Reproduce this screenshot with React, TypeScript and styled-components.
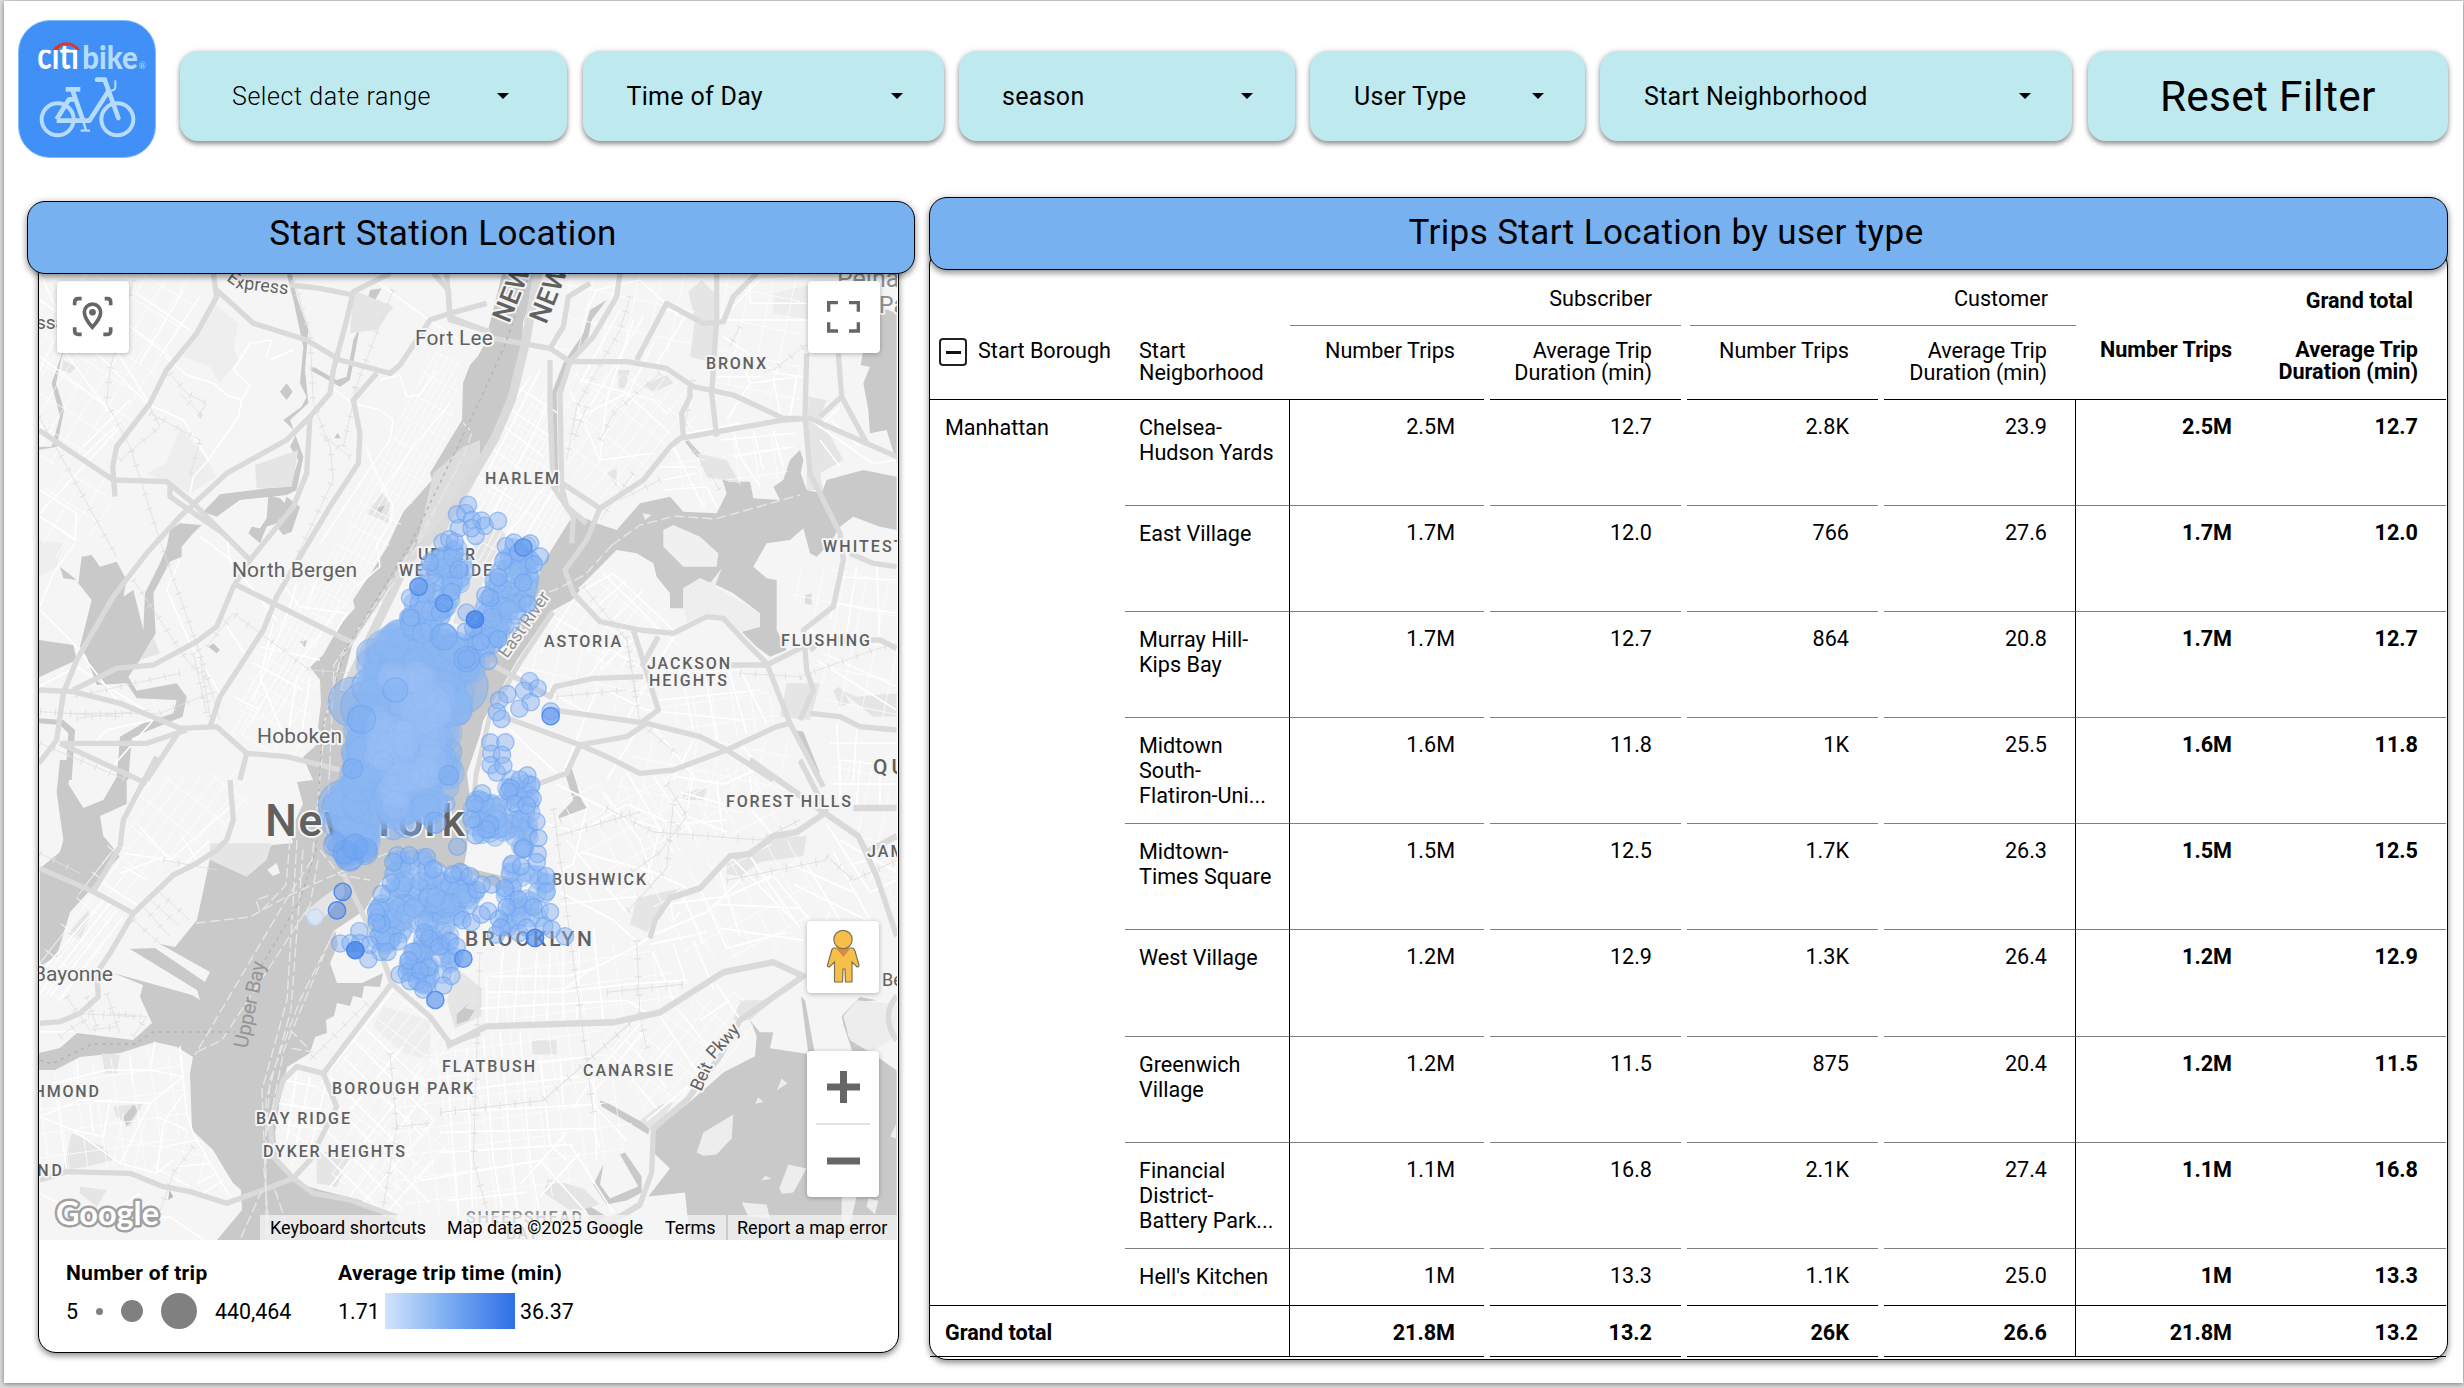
import React from 'react';
import styled, { createGlobalStyle, css } from 'styled-components';

const GlobalStyle = createGlobalStyle`
  *, *::before, *::after { box-sizing: border-box; }
  body { margin: 0; background: #dedede; font-family: Roboto, "Liberation Sans", sans-serif; color: #000; }
`;

const Frame = styled.div`
  width: 2464px;
  height: 1388px;
  padding: 1px 1px 5px 4px;
  background: #dcdcdc;
  overflow: hidden;
`;

const Page = styled.main`
  height: 1382px;
  background: #fff;
  padding: 19px 14px 0 14px;
  box-shadow: 0 1px 5px rgba(0, 0, 0, 0.45);
  display: flex;
  flex-direction: column;
`;

/* ---------- filter bar ---------- */

const TopBar = styled.header`
  display: flex;
  height: 138px;
  padding-right: 1px;
`;

const LogoSlot = styled.div`
  width: 138px;
  height: 138px;
  margin-right: 24px;
  flex: none;
`;

const Filters = styled.div`
  display: flex;
  gap: 15.5px;
  padding-top: 31px;
  flex: 1;
`;

const FilterBox = styled.button<{ $w: number; $left: number; $right: number; $light?: boolean }>`
  width: ${p => p.$w}px;
  height: 90px;
  flex: none;
  border: 0;
  border-radius: 18px;
  background: #bee9ef;
  box-shadow: 0 3px 5px rgba(0, 0, 0, 0.4), 0 0 6px rgba(0, 0, 0, 0.12);
  padding: 0 ${p => p.$right}px 0 ${p => p.$left}px;
  display: flex;
  align-items: center;
  justify-content: space-between;
  font-family: Roboto, "Liberation Sans", sans-serif;
  font-size: 25px;
  font-weight: ${p => (p.$light ? 300 : 400)};
  letter-spacing: ${p => (p.$light ? 0.56 : 0.3)}px;
  white-space: nowrap;
  color: #000;
`;

const Caret = styled.span`
  width: 0;
  height: 0;
  border: 6px solid transparent;
  border-top: 6px solid #000;
  border-bottom: 0;
`;

const ResetButton = styled(FilterBox)`
  justify-content: center;
  font-size: 42.4px;
  font-weight: 400;
`;

/* ---------- panels ---------- */

const Panels = styled.div`
  display: flex;
  align-items: flex-start;
  padding-top: 39px;
  margin-left: 9px;
`;

const Column = styled.section<{ $w: number; $ml?: number; $mt?: number }>`
  width: ${p => p.$w}px;
  margin-left: ${p => p.$ml ?? 0}px;
  margin-top: ${p => p.$mt ?? 0}px;
  flex: none;
`;

const Banner = styled.h2<{ $shift?: number; $lift?: number }>`
  position: relative;
  z-index: 2;
  height: 73px;
  margin: 0;
  border: 1.5px solid #000;
  border-radius: 18px;
  background: #78b1f0;
  box-shadow: 0 3px 6px rgba(0, 0, 0, 0.4), 0 0 8px rgba(0, 0, 0, 0.12);
  text-align: center;
  padding-right: ${p => p.$shift ?? 0}px;
  padding-bottom: ${p => p.$lift ?? 3}px;
  display: flex;
  align-items: center;
  justify-content: center;
  font-size: 35px;
  font-weight: 400;
  line-height: 1;
  letter-spacing: 0.4px;
`;

const Card = styled.div<{ $h: number; $ml?: number; $mr?: number }>`
  height: ${p => p.$h}px;
  margin: -22px ${p => p.$mr ?? 0}px 0 ${p => p.$ml ?? 0}px;
  padding-top: 20px;
  border: 1px solid #000;
  border-radius: 18px;
  background: #fff;
  box-shadow: 0 3px 6px rgba(0, 0, 0, 0.4), 0 0 6px rgba(0, 0, 0, 0.1);
`;

/* ---------- map ---------- */

const MapArea = styled.div`
  position: relative;
  height: 967px;
  margin-right: 1px;
  overflow: hidden;
  background: #f5f5f5;
`;

const MapButton = styled.button<{ $x: number; $y: number; $h?: number }>`
  position: absolute;
  left: ${p => p.$x}px;
  top: ${p => p.$y}px;
  width: 72px;
  height: ${p => p.$h ?? 72}px;
  border: 0;
  padding: 0;
  border-radius: 4px;
  background: #fff;
  box-shadow: 0 1px 5px rgba(0, 0, 0, 0.28);
  display: flex;
  flex-direction: column;
  align-items: center;
  justify-content: center;
`;

const Attribution = styled.div`
  position: absolute;
  right: 0;
  bottom: 0;
  height: 25px;
  width: 637px;
  padding-left: 10px;
  display: flex;
  align-items: center;
  background: rgba(245, 245, 245, 0.72);
  font-size: 18px;
  line-height: 25px;
  white-space: nowrap;
`;

const AttrItem = styled.span<{ $w: number }>`
  width: ${p => p.$w}px;
  flex: none;
`;

const AttrDivider = styled.span`
  width: 2px;
  height: 25px;
  margin-right: 9px;
  background: #cacaca;
`;

const Legend = styled.div`
  display: flex;
  padding: 20px 0 0 27px;
  font-size: 21.4px;
`;

const LegendGroup = styled.div<{ $w: number }>`
  width: ${p => p.$w}px;
`;

const LegendTitle = styled.div`
  font-weight: 700;
  font-size: 21px;
  line-height: 26px;
  letter-spacing: 0.28px;
  white-space: nowrap;
`;

const LegendRow = styled.div`
  display: flex;
  align-items: center;
  height: 36px;
  margin-top: 7px;
`;

const Dot = styled.i<{ $d: number; $ml: number }>`
  width: ${p => p.$d}px;
  height: ${p => p.$d}px;
  margin-left: ${p => p.$ml}px;
  border-radius: 50%;
  background: #808080;
`;

const LegendValue = styled.span<{ $w?: number; $ml?: number }>`
  width: ${p => (p.$w ? p.$w + 'px' : 'auto')};
  margin-left: ${p => p.$ml ?? 0}px;
`;

const Ramp = styled.span`
  width: 130px;
  height: 36px;
  background: linear-gradient(90deg, #d1e3fb 0%, #78abf1 50%, #2f6fe8 100%);
`;

/* ---------- table ---------- */

const COLS = '195px 164px 201px 197px 197px 191px 187px 184px';

const Table = styled.div`
  font-size: 21.6px;
  width: 1516px;
  position: relative;
`;

const GroupRow = styled.div`
  display: grid;
  grid-template-columns: 360px 391px 9px 386px 370px;
  height: 57px;
`;

const GroupCell = styled.div<{ $line?: boolean; $bold?: boolean; $pr: number }>`
  border-bottom: 1px solid ${p => (p.$line ? '#808080' : 'transparent')};
  padding: ${p => (p.$bold ? 18 : 16)}px ${p => p.$pr}px 0 0;
  line-height: 28px;
  text-align: right;
  font-weight: ${p => (p.$bold ? 700 : 400)};
`;

const Row = styled.div<{ $h: number }>`
  display: grid;
  grid-template-columns: ${COLS};
  height: ${p => p.$h}px;
`;

type LineKind = 'none' | 'soft' | 'hard';
const lineColor = { none: 'transparent', soft: '#808080', hard: '#000' };

const Cell = styled.div<{
  $line: LineKind; $gap?: boolean; $rule?: boolean; $bold?: boolean; $pr?: number; $pt: number; $lh: number; $pl?: number;
}>`
  border-bottom: 1px solid ${p => lineColor[p.$line]};
  margin-right: ${p => (p.$gap ? 6 : 0)}px;
  padding: ${p => p.$pt}px ${p => p.$pr ?? 0}px 0 ${p => p.$pl ?? 0}px;
  line-height: ${p => p.$lh}px;
  font-weight: ${p => (p.$bold ? 700 : 400)};
  white-space: pre;
  ${p => p.$pr !== undefined && css`text-align: right;`}
  ${p => p.$rule && css`border-left: 1px solid #000;`}
`;

const BoroughHead = styled.div`
  display: flex;
  align-items: flex-start;
  gap: 11px;
`;

const CollapseBox = styled.span`
  width: 28px;
  height: 28px;
  margin-top: -2px;
  border: 2px solid #222;
  border-radius: 4px;
  display: flex;
  align-items: center;
  justify-content: center;
  &::after { content: ''; width: 15px; height: 3px; background: #111; }
`;

/* ---------- logo ---------- */

const Logo = () => (
  <svg width="138" height="138" viewBox="54 60 414 414">
    <defs>
      <clipPath id="noDots"><path d="M54 149H186V138H206V149H250V230H54Z" /></clipPath>
    </defs>
    <rect x="55.5" y="61.5" width="411" height="411" rx="94" fill="#4090f8" stroke="#86bbfa" strokeWidth="3" />
    <g fontFamily="Lato, sans-serif" fontWeight="700">
      <text x="112" y="206" fontSize="112" textLength="124" lengthAdjust="spacingAndGlyphs" fill="#fff" clipPath="url(#noDots)">citi</text>
      <text x="247" y="206" fontSize="97" fontWeight="900" textLength="166" lengthAdjust="spacingAndGlyphs" fill="#b5dbfd">bike</text>
      <text x="416" y="206" fontSize="26" fontWeight="400" fill="#b5dbfd">®</text>
    </g>
    <path d="M158 150Q173 127 199 127T240 150H229Q218 136 199 136T174 150Z" fill="#d8382f" />
    <g fill="none" stroke="#b5dbfd" strokeWidth="12">
      <circle cx="173" cy="358" r="48" />
      <circle cx="352" cy="358" r="48" />
      <path d="M197 268H241" strokeWidth="14" />
      <path d="M218 272L250 364" strokeWidth="14" />
      <path d="M170 362H268L326 272" strokeWidth="14" strokeLinejoin="round" />
      <path d="M291 239H314L355 354" strokeWidth="14" strokeLinecap="round" />
      <path d="M170 358L207 298H224" strokeWidth="14" strokeLinejoin="round" />
      <path d="M346 241V262Q346 271 332 272" strokeWidth="6" />
      <path d="M250 364L258 391M242 392H270" strokeWidth="7" />
    </g>
  </svg>
);

/* ---------- base map ---------- */

// Drawing sheets: each holds its own local units and is scaled onto the map.
const NW = 'translate(20 260) scale(.33333)';
const NE = 'translate(440 260) scale(.33333)';
const SW = 'translate(30 840) scale(.33333)';
const WM = 'translate(20 760) scale(.33333 .4005)';
const SE = 'translate(440 760) scale(.33333 .4005)';

const WATER = '#c9c9c9';
const PARK = '#e5e5e5';
const PALE = '#eeeeee';
const HWY = '#dadada';

const GRIDS: { id: string; a: number; w: number; h: number }[] = [
  { id: 'g1', a: 29, w: 6, h: 24 },
  { id: 'g2', a: 32, w: 18, h: 26 },
  { id: 'g3', a: -8, w: 19, h: 24 },
  { id: 'g4', a: 38, w: 12, h: 30 },
  { id: 'g5', a: 12, w: 22, h: 32 },
  { id: 'g6', a: -28, w: 20, h: 27 },
];

const STREET_AREAS: [string, string][] = [
  ['g1', 'M520 415L552 380L556 490L566 515L520 590L450 545L490 470Z'],
  ['g2', 'M39 273H205L160 370L120 440L40 470Z'],
  ['g2', 'M45 470L110 480L112 520L60 560L39 540Z'],
  ['g1', 'M452 430L425 480L390 545L350 600L320 640L300 700L225 740L275 630L340 540L385 450L430 350L460 360Z'],
  ['g5', 'M570 273H700L690 350L640 360L570 350L545 370Z'],
  ['g4', 'M565 370L690 380L700 430L640 480L600 500L565 470Z'],
  ['g5', 'M720 273L800 273V410L760 405L715 380Z'],
  ['g3', 'M720 440L790 430L790 470L760 490L725 480Z'],
  ['g3', 'M665 450L710 460L722 500L700 510L675 480Z'],
  ['g4', 'M580 600L612 573L680 640L660 680L600 670L560 640L550 620Z'],
  ['g5', 'M540 640L640 640L660 720L560 700L500 690Z'],
  ['g3', 'M660 700L760 680L790 730L720 740L660 720Z'],
  ['g5', 'M785 570L850 570L897 580V720L830 710L810 650Z'],
  ['g6', 'M560 790L760 760L790 820L690 850L640 900L580 900Z'],
  ['g5', 'M640 740L790 740L790 800L700 830L610 800Z'],
  ['g6', 'M650 880L720 855L790 840L820 900L790 950L730 960L660 950Z'],
  ['g5', 'M830 760H897V900L870 880Z'],
  ['g3', 'M480 960L640 940L690 990L640 1015L490 1020Z'],
  ['g4', 'M600 1020L690 1005L740 990L755 1030L690 1100L640 1110L600 1060Z'],
  ['g3', 'M455 1030L600 1025L620 1100L640 1140L560 1190L500 1240H420L380 1150L420 1060Z'],
  ['g4', 'M335 1070L400 995L450 1040L420 1100L460 1150L400 1200L330 1180L350 1110Z'],
  ['g2', 'M283 1080L325 1080L335 1100L310 1150L290 1170L278 1120Z'],
  ['g3', 'M39 1075L150 1048L182 1060L188 1130L140 1170L39 1170Z'],
  ['g5', 'M110 1110L190 1130L235 1195L170 1180L110 1165Z'],
  ['g4', 'M39 990L39 960L105 850L130 870L95 960L60 1010Z'],
  ['g4', 'M140 780L240 770L250 810L190 850L120 900L100 860Z'],
  ['g2', 'M255 640L320 680L300 760L240 745Z'],
];

const Sheet = ({ t, children }: { t: string; children: React.ReactNode }) => <g transform={t}>{children}</g>;

const Water = () => (
  <g fill={WATER}>
    <path d="M503 270L490 323L483 347L478 356L470 365L463 383L462 420L430 473L432 480L417 497L403 512L387 547L373 570L353 600L355 608L340 625L323 655L310 667L320 680L321 703L318 727L322 740L303 757L313 780L297 782L303 804L290 832L293 843L272 845L247 875L210 858L207 873L197 920L175 947L160 944L210 972L205 982L155 948L130 949L197 990L200 1000L192 995L113 973L143 985L140 997L152 1023L133 1040L77 1033L60 1048L39 1053V1070H55L80 1057L120 1053L155 1042L177 1047L193 1057L190 1073L192 1130L213 1150L233 1183L241 1190L242 1210L217 1240H420L393 1217L360 1200L320 1190L297 1183L277 1157L275 1133L280 1100L287 1067L310 1053L315 1037L327 1033L326 1020L334 1016L337 1003L350 1006L353 996L362 998L364 986L380 987L383 973L362 983L337 983L330 963L338 945L335 930L365 910L382 880L410 866L420 858L450 870L463 870L467 850L470 800L467 773L480 735L483 721L517 660L550 612L572 600L580 590L560 570L573 540L570 520L545 560L520 620L430 700L340 690L353 643L413 550L440 527L493 437L510 400L522 347L523 323L540 270Z" />
    <Sheet t={NE}>
      <path d="M500 800L530 810L600 730L690 710L730 755L830 760L860 700L835 620L770 590L735 545L745 540L785 585L835 610L865 665H930L940 715L1020 720L1000 680L1030 660L1050 600L1080 570L1090 600L1082 640L1100 690L1145 700L1160 660L1270 630L1370 650V810L1320 800L1240 770L1200 800L1170 850L1130 890L1110 880L1090 805L1050 840L980 850L940 920L980 955L1010 960V1110L1040 1170L990 1190L950 1160L905 1115L960 1100V1060L880 1000L840 980L780 955L730 985V1045H690V1000L650 950L640 910L590 880L530 870L480 920L420 980L380 1015L330 1020L280 1060L300 980L320 890L385 840L400 760L470 790Z" />
      <path d="M1330 145L1370 160V610L1340 510L1290 520L1285 450L1270 370L1290 320L1262 316L1270 270Z" />
      <path d="M500 120L450 150L430 220L370 310L335 400L345 690L355 690L350 400L385 310L445 230L455 180Z" />
      <path d="M1060 1410L1090 1415L1140 1540L1105 1510Z" />
    </Sheet>
    <Sheet t={NW}>
      <path d="M185 890L215 885L240 920L290 905L320 960L310 1010L340 990L370 1110L375 1000L420 910L440 860L450 810L480 790L545 795L515 825L485 860V890L450 905L400 1000L407 1120L360 1200L325 1250L350 1292L470 1270L500 1310L488 1370L390 1410L335 1435L325 1560H290L300 1430L370 1390L460 1360L470 1320L350 1315L320 1270L230 1275L200 1190L180 1160L215 1020L175 970Z" />
      <path d="M57 1140L160 1155L170 1200L57 1252Z" />
      <path d="M120 920L170 960L130 955Z" />
      <path d="M550 755L600 703L740 685L810 680L835 600L810 560L830 520L790 480L845 440L860 410L840 370L850 260L820 120L800 40H815L830 110L865 210L855 330L865 430L810 480L850 590L830 690L800 705L660 720L590 770Z" />
      <path d="M745 705L780 715L800 735L770 790L740 800L720 850L685 820L695 800L720 805L740 775Z" />
      <path d="M800 710L840 740L815 815L790 825L770 800Z" />
      <path d="M780 395L800 370L818 395L800 420Z" />
      <path d="M130 270L95 370L120 470L95 560H57V570L110 560L132 450L108 370Z" />
      <path d="M1050 90L1085 85L1020 200L990 360L960 380L870 330L880 320L950 360L980 350L1000 240L1025 190Z" />
      <path d="M57 1375L130 1380L165 1410L155 1560H135L145 1420L120 1395L57 1390Z" />
    </Sheet>
    <Sheet t={WM}>
      <path d="M120 0H160L145 60L190 120L250 100L320 0V110L240 140L250 190L300 240L215 320L150 380L110 490L60 515V270L120 230L130 200L110 80Z" />
    </Sheet>
    <Sheet t={SE}>
      <path d="M930 650L960 680L1000 680L990 720L1110 735H1240L1210 660L1205 640L1250 600L1260 592L1310 600L1250 605L1215 640L1225 690L1370 775V1200H750L735 1080L625 1090L690 1020L640 980L645 920L740 860L830 795L850 780L945 740L950 690Z" />
      <path d="M1083 590L1095 600L1125 735H1105Z" />
      <path d="M480 850L500 855L630 915L625 935L485 865Z" />
      <path d="M540 985L555 980L605 1040V1080L560 1100L500 1110L460 1060L490 1010L480 1060L510 1095L595 1065Z" />
      <path d="M370 1090L440 1110L540 1160L520 1200L440 1130Z" />
      <path d="M370 20L395 20L425 100L440 120L360 145L370 170L355 140L400 100Z" />
    </Sheet>
    <path d="M455 865L520 880L500 890Z" />
  </g>
);

const Land = () => (
  <g>
    <Sheet t={NE}>
      <g fill={PARK}>
        <path d="M745 95L785 60L825 100V310L750 290L765 180Z" />
        <path d="M535 330H570L555 385H535Z" />
        <path d="M610 375L680 345L700 370L640 395Z" />
        <path d="M1105 410L1160 420L1140 470L1210 600L1140 640L1150 690L1100 690Z" />
        <path d="M1000 100L1170 60L1110 180L1000 160Z" opacity=".45" />
        <path d="M500 640L530 625V680Z" />
        <path d="M1040 1270L1140 1270L1110 1380L1020 1370Z" />
        <path d="M1200 1290L1250 1310L1370 1300V1370H1300L1250 1330Z" />
        <path d="M770 580L860 600L900 670L800 650Z" />
        <path d="M100 850L180 800L200 830L130 960L90 1100L40 1090Z" />
      </g>
      <g fill="#f0f0f0">
        <path d="M670 810L700 795L780 830L835 880L830 920L730 920L670 860Z" />
        <path d="M845 925L825 980L960 1060V1100L905 1115L850 1075L800 1060L740 1085L730 1045V985L780 955L810 970Z" fill={PALE} />
        <path d="M608 760L635 765L615 780Z" />
      </g>
      <path d="M1180 1290L1200 1280L1230 1330L1200 1340Z" fill={PARK} />
      <path d="M1095 1005L1115 1000V1035L1095 1030Z" fill="#dcdcdc" />
    </Sheet>
    <Sheet t={NW}>
      <g fill={PALE}>
        <path d="M580 130L655 190L640 260L655 300L600 370L570 320L490 290L530 210Z" />
        <path d="M480 500L560 600L590 650L510 700L380 640L440 610Z" />
        <path d="M57 840L130 850L110 920L57 950Z" />
      </g>
      <g fill={PARK}>
        <path d="M705 615L835 570L815 680L710 685Z" />
        <path d="M1000 90L1120 140L1070 210L990 220Z" />
        <path d="M400 1130L420 1180L360 1200Z" />
        <path d="M1080 690L1110 730L1105 790L1040 760Z" />
        <path d="M1240 640L1330 560L1380 540V640L1200 980L1180 900Z" opacity=".7" />
        <path d="M130 300L170 320L150 340L125 330Z" />
      </g>
      <g fill={WATER}>
        <path d="M565 1160L580 1150L600 1170L590 1180Z" />
        <path d="M840 1145L860 1140L855 1162Z" />
        <path d="M943 535L953 518L962 535Z" />
        <path d="M1065 745L1100 735L1085 762Z" />
      </g>
    </Sheet>
    <Sheet t={SW}>
      <g fill={PARK}>
        <path d="M540 10L725 10L710 60L650 110L540 60Z" />
        <path d="M165 170L180 230L150 300L115 280L175 210Z" />
        <path d="M820 220L880 170L940 130L945 160L895 220L855 255Z" />
        <path d="M215 640L270 645L260 700H225Z" />
        <path d="M125 880L220 920L250 960L170 980L100 990Z" />
        <path d="M250 800L340 790L300 860L260 830Z" />
        <path d="M860 930L960 950L920 1040L860 1030Z" />
        <path d="M150 1040L230 1050L200 1100L150 1060Z" />
      </g>
      <path d="M1060 500L1200 540V660L1120 640L1030 560Z" fill={PALE} />
      <path d="M310 795L325 810L290 860L280 830Z" fill={WATER} />
      <path d="M418 1050L430 1070L415 1080Z" fill="#b9b9b9" />
      <path d="M712 90L740 68L750 100L728 108Z" fill="#f2f2f2" />
    </Sheet>
    <Sheet t={SE}>
      <g fill={PARK}>
        <path d="M50 520L125 570V640L45 670L20 600Z" />
        <path d="M860 260L980 195L1100 190L1090 240L960 255L900 290L860 285Z" />
        <path d="M590 345L720 320L690 345L620 430L570 410Z" />
        <path d="M900 600L1000 600L930 650L880 650Z" />
        <path d="M275 700H350V735H275Z" />
        <path d="M310 1080L325 1045L430 1070L480 1110L400 1130Z" />
        <path d="M660 860L700 855L640 930L600 900Z" />
        <path d="M730 80L800 70L790 100H730Z" />
      </g>
      <g fill="#ededed">
        <path d="M1210 640L1250 600L1370 610V690L1290 730L1230 700Z" />
        <path d="M770 980L790 930L880 885L875 945L830 985L790 988Z" />
        <path d="M905 1105L980 1110L990 1145L925 1140Z" />
        <path d="M1018 1070L1045 1010L1100 1020L1060 1080L1025 1083Z" />
        <path d="M1010 825L1025 795L1042 808Z" />
        <path d="M945 858L955 842L970 854Z" />
        <path d="M1205 1090L1250 1090L1230 1160H1205Z" />
        <path d="M1285 1095L1315 1100L1305 1135L1280 1115Z" />
        <path d="M1350 940L1368 910V945Z" />
        <path d="M965 1050L975 1038L995 1045Z" />
      </g>
      <path d="M50 635L90 605L75 620L105 625L85 650L50 660Z" fill={WATER} />
    </Sheet>
  </g>
);

const NW_HWY = [
  'M580 40L590 110L530 220L440 330L390 430L290 560L278 620L285 710',
  'M57 510L160 580L280 660L440 665L520 730L610 820L690 900',
  'M590 90L700 190L860 240L960 300L1110 340L1140 315L1230 180L1290 160L1400 130',
  'M1240 40L1285 90L1290 170L1390 210',
  'M1110 40L1000 95L980 180L940 330L930 400L870 470L800 540L620 640L480 770L380 880L280 1010L170 1200L130 1300L110 1440L57 1510',
  'M870 470L860 640L820 740L690 900',
  'M810 75L900 85L1000 105',
  'M1070 340L1000 420L1020 520L1015 610L930 740L840 890',
  'M690 900L640 980L590 1100L530 1145L400 1215L290 1225L160 1290',
  'M650 975L720 1010L860 1080L1000 1150',
  'M840 890L770 1010L730 1110L600 1310L570 1400',
  'M57 1290L160 1295L300 1330L480 1405L590 1400L680 1480L800 1490L960 1530',
  'M120 1450L380 1450L500 1410M120 1450L380 1570M480 1410L380 1560M680 1480L660 1560',
  'M450 680L450 710L580 800L610 820',
];
const NE_HWY = [
  'M390 305L560 305L680 325L760 380L880 405L1030 475L1110 475L1280 550L1370 590',
  'M830 40L830 180L815 400L830 530',
  'M1100 280L1095 470L1110 640L1200 820L1210 900L1180 1040L1090 1110L1100 1230L1120 1290L1080 1380',
  'M1195 280L1205 410L1140 470M1205 410L1280 550',
  'M1110 475L1030 480L720 535L690 560L610 660L480 745L360 665',
  'M390 305L360 400L365 680L380 740L440 790M480 745L440 840L375 930L400 1000L480 1085L600 1110L700 1120L800 1070L850 1075L920 1150L980 1210',
  'M330 300V450L340 680L400 770L395 850',
  'M390 305L460 230L530 110L540 40M160 235L330 265L390 305M330 265L370 200L385 110L450 70',
  'M590 300L680 130L790 190L850 185L880 110L950 40',
  'M870 1215H980L1110 1150L1140 1150M980 1210L1050 1390L1150 1580',
  'M150 1210L330 1310L345 1280L460 1255L610 1250M580 1110L655 1350L600 1390M655 1130L605 1220',
  'M190 1370L420 1455L560 1430L620 1390M340 1350L620 1390L780 1430L860 1470L1010 1400L1050 1390M1110 1360L1200 1370L1260 1400L1370 1410',
  'M420 1455L380 1540L300 1570M420 1455L500 1490L600 1540L700 1530L860 1470L1000 1560',
  'M750 380L750 410L725 460L730 530M1110 1170L1150 1140H1320L1370 1165M1230 880L1300 910L1370 920',
  'M20 40L30 180L150 215',
];
const SW_HWY = [
  'M30 85L190 155L310 220L430 105L500 70L560 30L590 0L610 -60L600 -180',
  'M270 20L190 155M270 20L280 -60L380 -250M310 220L240 340L200 400L205 470L150 520L90 545L30 550',
  'M30 1020L110 995L300 1000L400 1040L480 1055L590 1090L700 1050L790 1015L840 960L920 800L880 700L800 680L760 720L720 850L730 950L790 1015L850 1060L960 1080L1100 1130',
  'M880 700L1085 430L1050 330L940 100M1085 430L1200 530L1260 610L1350 580',
];
const SE_HWY = [
  'M930 0L1150 130L1255 190L1310 290L1370 440M1080 0L1160 130M1240 120H1370',
  'M630 445L645 400L690 345L780 320L870 240L930 235L1000 190L1070 180L1150 135',
  'M20 715L140 665L520 655L660 630L850 530L1000 505L1090 540L900 650L840 740L740 850L640 920L635 1030L600 1110L540 1140L460 1160',
  'M1255 190L1280 230L1370 190M1370 590Q1320 640 1370 700',
];
const ROADS: [string, string[]][] = [
  [NW, [
    'M60 120L300 290L390 435L490 480L565 600L520 650L510 700', 'M200 40L130 180L60 330', 'M350 100L510 210M280 160L460 300M210 260L380 430M60 290L260 440',
    'M435 290L500 345L580 370L620 405L665 420M690 375L665 420L655 470L565 600M60 500L180 600L295 490', 'M130 270L300 500L60 760M190 560L330 420',
    'M60 770L165 840L170 760L60 690M165 850L100 940L60 1040M60 1050L160 1150L290 1320', 'M740 290L755 240L690 250L640 330L690 375M750 300L820 270',
    'M930 380L1000 430L1080 450L1120 480L1110 540L1040 640L900 850', 'M1070 65L1240 190L1370 270M1080 360L1140 345L1160 410L1200 405L1250 330M1290 430L1180 560L1060 730',
    'M1040 560L1060 620L1120 740L1110 790L1070 850L1080 920L1010 980', 'M540 830L660 920M620 830L630 910L700 990L770 1080M480 900L440 990L510 1150L600 1300',
    'M780 960L840 1040L980 1060L940 1130M830 970L810 1040L700 1320M620 1100L680 1190M720 1160L900 1200M700 1210L850 1290M640 1310L720 1350M760 1090L720 1250L800 1450',
    'M830 1250L800 1450M870 1250L840 1460M900 940L860 1040M960 1040L850 1190', 'M60 40L130 190M420 290L540 110M360 310L490 90', 'M57 1280L170 1220L420 1380M230 1440L260 1410L400 1380L260 1540',
  ]],
  [NE, [
    'M230 380L370 470M200 440L330 530M180 490L310 590M150 560L270 650M100 640L220 720M300 330L120 680M330 420L150 780M270 350L160 520', 'M350 680L220 880M330 660L190 840',
    'M390 390L480 600L640 580M400 480L560 400L690 520M420 360L640 420L680 460M480 600L500 420L580 180', 'M440 150L470 90L600 60M600 60L720 170M610 170L450 440M540 150L420 370M640 250L540 450M680 150L740 160L640 330',
    'M850 230L1010 340L1090 350M930 370L860 480M930 370L1070 350L1050 470M930 370L900 280M1000 350L1020 460M850 170L960 60L1080 50M850 180H1100M930 40V130L1100 130M830 350L960 350',
    'M840 540L1070 520M880 510L900 590L960 680M940 510L970 630M1000 510L1030 620M880 590L1060 560M660 620H770M670 660L770 640M700 560L790 740M670 690L800 680L830 740M740 520L900 490',
    'M430 990L520 940L700 1110M470 1040L560 960M520 1080L610 990M490 940L660 1110M400 1020L300 1180M620 1100L480 1230M560 1100L430 1270M340 1070L600 1220M220 1230L460 1370M700 1130L560 1380M640 1190L860 1230',
    'M680 1240L900 1230L980 1390M720 1220L760 1410M790 1210L830 1440M860 1210L920 1420M660 1320L960 1290M500 1290L620 1350L900 1380M1100 1130L1370 1150M1190 950L1370 960M1250 920L1220 1120M1310 910L1320 1150M1190 1030L1370 1060M1150 1180L1370 1280M1200 960L1170 1080M1130 1200L1370 1350',
    'M1110 480L1300 610L1370 600M1170 480L1260 560M1140 540L1200 620M1200 440L1140 500M200 1400L350 1540M470 1290L360 1560M580 1430L500 1560M640 1400L770 1560M900 1450L990 1560M760 1440L700 1560M1190 1390L1200 1560M1250 1410L1240 1560M1170 1450H1370M1200 1500L1370 1520',
  ]],
  [SW, [
    'M30 400L220 180M30 460L240 190M60 470L260 210M90 480L280 230M220 130L330 200L540 0M270 100L400 50M280 40L420 60L600 -100M420 60L330 -40M500 60L450 -20M350 120L280 80',
    'M375 605L360 690L230 690L30 740M360 690L460 710L450 620M140 660L150 780L30 830M150 780L360 790L460 710M300 650L310 740M360 790L270 970L380 1000L400 850L460 760M30 830L130 870L270 970M80 770L110 990M180 790L190 880M240 780L220 890L130 870',
    'M450 620L470 820L490 880L540 970L600 1070M400 920L500 900M370 980L480 1040M440 980L540 970M500 1030L560 1000M520 1060L580 1020M430 960L380 1000M470 870L380 830',
    'M760 720L860 740M740 790L880 810M730 850L900 870M750 910L850 930M800 700L770 900M840 710L790 960M890 720L840 930',
    'M900 690L1090 450M940 650L1180 890M970 600L1210 840M1000 560L1200 750M900 710L1140 950M920 800L1200 1090M880 860L1120 1110M860 920L1060 1120M1180 680L900 1040M1120 620L960 810M1200 740L960 1070M1210 840L1000 1090M1210 960L1060 1130',
    'M30 575H130M30 1060L200 1150L420 1130L520 1200M200 1150L330 1060',
  ]],
  [SE, [
    'M140 580H360L560 560L740 550M120 620L560 600L640 640M150 540L380 540L460 520M290 480L280 660M330 480L320 660M370 460V660M420 440L410 650M460 420L490 650M240 470L220 660M190 470L170 660M140 540V660',
    'M360 580L440 530L600 460L520 400L360 330M600 460L630 440L800 380L900 300M630 460L800 430M640 480L700 600M700 460L740 560M760 450L820 570M730 340L790 460M780 320L860 470L1040 430M840 280L900 440M690 360L860 340L1000 290M870 240L1060 400M930 240L1080 420M1000 290L1110 400M820 360L1080 370M840 420L1090 450',
    'M320 160L420 180L560 110M440 120L400 260L350 280M560 110L700 160L860 150M490 80L600 200L640 300M560 30L700 230M640 40L760 190M350 60L540 140L660 170L620 300M420 230L640 280L740 320M360 360L600 340M380 200L560 380',
    'M700 40L850 60L960 20M720 80L850 110L1010 90M760 30L740 140L860 180M830 50L850 200M930 40L940 130L1000 190M1160 160L1290 330M1180 60H1370M1200 0V110M1260 0L1250 110M1320 0V120M1200 200L1370 280M1240 260L1370 230M1290 330L1370 300M1050 260L1240 330M1060 310L1280 400M1100 260L1200 400M1180 230L1290 400',
    'M620 640L470 780L400 870M660 640L780 790M710 620L830 740M780 650L870 600M830 560L910 660M560 700L680 820M520 740L650 870M610 680L460 830M700 700L620 780M780 790L620 900',
    'M130 690L160 1000L200 1180M180 680L210 960L240 1180M240 680L270 1000L310 1180M300 740L330 960L380 1000M360 740L370 870M80 720L100 1180M20 760L60 1180M100 770L460 740M0 830L420 790M10 880L460 860L560 950M0 930L460 920L480 970M0 980L400 960M-60 1050L300 1000L440 1130M20 1100L260 1080M240 1060L380 930M300 1090L420 980M390 960L520 1130M460 800L470 1000',
    'M1100 420L1140 440L1170 380M690 350L700 400L720 380',
  ]],
];
const RAILS: [string, string[]][] = [
  [NW, ['M340 60L270 330L260 430L330 560L400 780L440 900L540 1180L600 1380', 'M820 60L870 220L880 430L930 560L940 660L830 890', 'M57 470L190 710L290 890', 'M450 340L500 400L560 430L540 460L480 400', 'M390 460L540 540L510 650', 'M300 600L420 500L390 440', 'M990 590L900 520M1010 380L970 560M1120 90L1000 400', 'M150 1360H420L570 1300M170 1375L390 1350M60 1355L300 1370M540 1190L570 1370M520 1180L560 1360M480 1240L160 1310', 'M1000 1240L870 1230L640 1060L560 1160', 'M340 960L500 1200L560 1260M60 1450L320 1560']],
  [NE, ['M570 110L540 210L410 440L380 600', 'M440 440L400 540M660 340L520 460L480 540M840 320L1000 330L1090 260L1200 220', 'M660 660L540 720M580 640L480 780M430 980L560 1140L600 1390L710 1480', 'M350 1310L560 1290M560 1130L590 1320M900 1240L1080 1250L1300 1170L1370 1150', 'M760 360L730 520L840 690M900 200L870 260']],
  [SW, ['M110 470L180 570L260 560M130 520L320 530M170 470L200 560M230 460L270 580M90 590L160 540M240 520L350 530L310 590', 'M330 190L420 290M310 240L400 320M350 170L450 260M380 150L480 240M30 40L150 100M400 60L560 90', 'M1010 490L840 660M490 920L430 1000L380 1140', 'M1080 640L1100 860L1060 1100M1100 860L1200 850']],
  [SE, ['M460 880L340 120M120 480L100 1000L160 1180M0 880L310 850L580 650L620 640M590 450L600 640L620 720M500 580L730 560M680 60L740 140L660 230L560 290M500 120L640 180L960 200L1080 150M350 190L600 130M700 110L680 270L560 380M1160 240L1240 300L1370 250', 'M860 300L1160 250']],
];

const Sheets = ({ items, render }: { items: [string, string[]][]; render: (d: string, i: number) => React.ReactNode }) => (
  <>{items.map(([t, list]) => <g key={t} transform={t}>{list.map(render)}</g>)}</>
);

/* ---------- stations ---------- */

let seed = 11;
const rnd = () => {
  seed = (seed * 1103515245 + 12345) % 2147483648;
  return seed / 2147483648;
};

type Pt = [number, number];
const inside = (x: number, y: number, poly: Pt[]) => {
  let hit = false;
  for (let i = 0, j = poly.length - 1; i < poly.length; j = i++) {
    const [xi, yi] = poly[i];
    const [xj, yj] = poly[j];
    if (yi > y !== yj > y && x < ((xj - xi) * (y - yi)) / (yj - yi) + xi) hit = !hit;
  }
  return hit;
};
const scatter = (poly: Pt[], n: number, r0: number, r1: number) => {
  const xs = poly.map(p => p[0]);
  const ys = poly.map(p => p[1]);
  const x0 = Math.min(...xs), x1 = Math.max(...xs), y0 = Math.min(...ys), y1 = Math.max(...ys);
  const out: number[][] = [];
  while (out.length < n) {
    const x = x0 + rnd() * (x1 - x0);
    const y = y0 + rnd() * (y1 - y0);
    if (inside(x, y, poly)) out.push([x, y, r0 + rnd() * (r1 - r0)]);
  }
  return out;
};

const UWS: Pt[] = [[400, 190], [440, 190], [470, 270], [440, 330], [400, 400], [350, 460], [290, 430], [310, 350], [350, 260]];
const UES: Pt[] = [[590, 190], [660, 190], [680, 240], [655, 330], [650, 370], [570, 460], [540, 520], [480, 460], [520, 400], [520, 330], [580, 250]];
const MID: Pt[] = [[280, 440], [400, 440], [470, 500], [480, 590], [440, 680], [410, 760], [420, 860], [390, 940], [330, 980], [260, 1000], [180, 1010], [90, 1000], [90, 930], [140, 850], [140, 720], [170, 600], [200, 500]];
const TIP: Pt[] = [[70, 1010], [190, 1000], [180, 1070], [120, 1100], [90, 1080]];
const BK1: Pt[] = [[260, 1090], [360, 1100], [390, 1140], [470, 1140], [500, 1190], [470, 1260], [400, 1300], [300, 1290], [230, 1370], [190, 1330], [200, 1250], [240, 1180]];
const BK2: Pt[] = [[500, 920], [570, 940], [600, 860], [660, 880], [670, 940], [650, 1080], [620, 1060], [560, 1040], [500, 1030], [480, 970]];
const BK3: Pt[] = [[600, 1120], [690, 1100], [710, 1170], [710, 1250], [690, 1300], [580, 1300], [570, 1180]];
const BK4: Pt[] = [[340, 1310], [420, 1310], [440, 1380], [400, 1460], [330, 1470], [280, 1440], [300, 1370]];

const EDGE: [number, number][] = [
  [474, 72], [441, 100], [466, 96], [486, 116], [515, 118], [524, 133], [564, 119], [447, 140], [497, 162], [485, 140], [398, 181], [418, 172], [434, 180],
  [360, 240], [300, 342], [303, 400], [326, 308], [445, 260], [425, 325], [390, 385], [588, 192], [612, 182], [660, 184], [640, 196], [625, 210], [690, 222], [672, 245], [580, 235], [640, 298], [565, 282],
  [526, 335], [540, 342], [653, 360], [470, 385], [467, 440], [490, 430], [512, 470], [565, 462], [535, 525], [470, 520], [659, 584], [683, 605], [642, 612], [592, 622], [567, 640], [662, 645], [628, 664], [561, 674], [574, 694], [722, 672], [722, 686],
  [541, 762], [586, 762], [544, 795], [576, 798], [542, 828], [560, 850], [580, 830], [652, 858], [664, 885], [668, 925], [630, 870], [602, 895], [595, 905], [615, 940], [650, 945],
  [679, 992], [685, 1040], [683, 1086], [640, 1070], [606, 1115], [633, 1122], [680, 1110], [708, 1150], [710, 1195], [720, 1255], [442, 1065], [497, 1032], [516, 910], [494, 940], [485, 985], [540, 1000], [530, 1015],
  [545, 1175], [585, 1185], [500, 1190], [515, 1175], [534, 1252], [457, 1278], [484, 1285], [514, 1262], [567, 1275], [558, 1320], [573, 1300], [625, 1218], [590, 1240], [627, 1315], [650, 1300], [703, 1295], [725, 1305], [765, 1325], [675, 1330], [670, 1240],
  [262, 1090], [298, 1090], [350, 1095], [370, 1130], [250, 1110], [243, 1170], [215, 1202], [215, 1290], [198, 1255], [200, 1285], [91, 1346], [148, 1310], [122, 1345], [150, 1345], [180, 1350], [175, 1392], [212, 1370], [232, 1370], [265, 1340], [450, 1138], [428, 1145], [480, 1150],
  [343, 1315], [358, 1332], [388, 1355], [420, 1340], [440, 1355], [460, 1390], [424, 1440], [400, 1468], [376, 1510], [269, 1436], [290, 1430], [300, 1455], [322, 1455], [340, 1480], [355, 1415], [310, 1370], [296, 1395], [330, 1425],
];
const DARK: [number, number, number][] = [[495, 405, 3], [326, 310, 1], [402, 358, 1], [98, 1196, 2], [81, 1250, 2], [136, 1365, 3], [675, 1330, 2], [376, 1510, 1], [722, 686, 1], [640, 196, 1], [460, 1390, 1]];
const LARGE: [number, number, number][] = [
  [130, 645, 75], [170, 660, 78], [450, 600, 84], [185, 505, 45], [265, 450, 45], [310, 420, 38], [240, 475, 42], [198, 555, 38], [401, 455, 40], [470, 520, 38], [256, 610, 37],
  [155, 695, 42], [128, 838, 30], [416, 858, 30], [375, 995, 32], [440, 670, 45], [415, 790, 40], [400, 830, 45], [100, 945, 75], [80, 950, 45], [135, 900, 52], [75, 1060, 34], [118, 1095, 42], [165, 1080, 38],
  [105, 1085, 35], [80, 1000, 42], [180, 600, 55], [410, 940, 25], [290, 1000, 40], [250, 1010, 36], [130, 790, 36], [170, 1010, 45], [330, 500, 50], [400, 520, 55], [430, 560, 55],
];

const MIDDLE = [...scatter(TIP, 26, 32, 40), ...scatter(MID, 250, 32, 56)];
const SMALL = [...scatter(UWS, 75, 27, 31), ...scatter(UES, 100, 27, 29), ...scatter(BK1, 140, 27, 30), ...scatter(BK2, 75, 27, 29), ...scatter(BK3, 36, 27, 28), ...scatter(BK4, 48, 27, 29)];
const CORE = scatter([[230, 560], [400, 560], [400, 700], [350, 880], [260, 960], [190, 900], [200, 700]], 60, 30, 50);

const Disc = ({ c }: { c: number[] }) => <ellipse cx={c[0]} cy={c[1]} rx={c[2]} ry={c[2] * 0.968} />;

const Stations = () => (
  <g transform="translate(310 480) scale(.33333 .34435)" strokeWidth="4">
    <g fill="#84aff0" fillOpacity=".5" stroke="#6ea5ef" strokeOpacity=".45">
      {LARGE.map((c, i) => <Disc key={i} c={c} />)}
    </g>
    <g fill="#8bb6f3" fillOpacity=".55" stroke="#7badf1" strokeOpacity=".22">
      {MIDDLE.map((c, i) => <Disc key={i} c={c} />)}
    </g>
    <g fill="#9cc0f6" fillOpacity=".35" stroke="#8ab5f3" strokeOpacity=".25">
      {CORE.map((c, i) => <Disc key={i} c={c} />)}
    </g>
    <g fill="#8db7f4" fillOpacity=".42" stroke="#75a9f0" strokeOpacity=".42">
      {SMALL.map((c, i) => <Disc key={i} c={c} />)}
    </g>
    <g fill="#85b1f3" fillOpacity=".45" stroke="#6ba2ef" strokeOpacity=".6">
      {EDGE.map((c, i) => <Disc key={i} c={[...c, 26]} />)}
    </g>
    <g fill="#6fa3f0" fillOpacity=".22" stroke="#629bec" strokeOpacity=".35">
      {LARGE.slice(8, 15).map((c, i) => <Disc key={i} c={c} />)}
    </g>
    <g fill="#6fa5f2" fillOpacity=".45" stroke="#629bec" strokeOpacity=".35">
      {[[118, 1095, 40], [165, 1075, 36], [105, 1080, 36], [75, 1050, 30], [135, 1065, 38]].map((c, i) => <Disc key={i} c={c} />)}
    </g>
    {DARK.map(([x, y, k], i) => (
      <ellipse key={i} cx={x} cy={y} rx="26" ry="25.2" fill={k === 1 ? '#5b93ec' : '#4a87ea'} fillOpacity={k === 3 ? 0.85 : 0.5} stroke="#3e7fe9" strokeOpacity={k === 1 ? 0.6 : 0.9} />
    ))}
    <ellipse cx="15" cy="1270" rx="25" ry="24" fill="#d5e5fa" fillOpacity=".7" stroke="#b4d1f7" strokeOpacity=".6" />
  </g>
);

/* ---------- labels ---------- */

type Label = { t: string; x: number; y: number; w?: number; s?: number; f?: number; c?: string; r?: number; end?: boolean };
const LABELS: Label[] = [
  { t: 'Fort Lee', x: 415, y: 345, w: 78, s: 21 },
  { t: 'North Bergen', x: 232, y: 577, w: 125, s: 21 },
  { t: 'Hoboken', x: 257, y: 743, w: 85, s: 21 },
  { t: 'Bayonne', x: 113, y: 981, w: 80, s: 21, end: true },
  { t: 'ssa', x: 36, y: 329, s: 19 },
  { t: 'xpress', x: 235, y: 288, w: 53, s: 18, r: 7 },
  { t: 'E', x: 226, y: 280, s: 18, r: 35 },
  { t: 'UPPER', x: 418, y: 560, w: 57, f: 500 },
  { t: 'WEST SIDE', x: 399, y: 576, w: 93, f: 500 },
  { t: 'HARLEM', x: 485, y: 484, w: 74, f: 500 },
  { t: 'BRONX', x: 706, y: 369, w: 60, f: 500 },
  { t: 'ASTORIA', x: 544, y: 647, w: 77, f: 500 },
  { t: 'JACKSON', x: 647, y: 669, w: 83, f: 500 },
  { t: 'HEIGHTS', x: 649, y: 686, w: 78, f: 500 },
  { t: 'FLUSHING', x: 781, y: 646, w: 89, f: 500 },
  { t: 'WHITESTONE', x: 823, y: 552, w: 118, f: 500 },
  { t: 'QUEENS', x: 873, y: 774, w: 100, s: 21, f: 500 },
  { t: 'New York', x: 265, y: 836, w: 200, s: 45, f: 500 },
  { t: 'FOREST HILLS', x: 726, y: 807, w: 125, f: 500 },
  { t: 'JAMAICA', x: 867, y: 857, w: 82, f: 500 },
  { t: 'BUSHWICK', x: 552, y: 885, w: 94, f: 500 },
  { t: 'BROOKLYN', x: 465, y: 946, w: 127, s: 21, f: 500 },
  { t: 'Belmont', x: 882, y: 986, s: 18 },
  { t: 'FLATBUSH', x: 442, y: 1072, w: 93, f: 500 },
  { t: 'BOROUGH PARK', x: 332, y: 1094, w: 141, f: 500 },
  { t: 'CANARSIE', x: 583, y: 1076, w: 90, f: 500 },
  { t: 'BAY RIDGE', x: 256, y: 1124, w: 94, f: 500 },
  { t: 'DYKER HEIGHTS', x: 263, y: 1157, w: 142, f: 500 },
  { t: 'RICHMOND', x: 99, y: 1097, w: 96, f: 500, end: true },
  { t: 'LAND', x: 62, y: 1176, w: 50, f: 500, end: true },
  { t: 'SHEEPSHEAD', x: 466, y: 1223, w: 116, f: 500, c: '#8d8d8d' },
  { t: 'BAY', x: 506, y: 1239, w: 32, f: 500, c: '#8d8d8d' },
  { t: 'Pelham', x: 837, y: 287, s: 25, c: '#8e8e8e' },
  { t: 'Park', x: 879, y: 313, s: 23, c: '#8e8e8e' },
  { t: 'NEW YORK', x: 509, y: 324, s: 27, f: 500, r: -68 },
  { t: 'NEW YORK', x: 546, y: 325, s: 27, f: 500, r: -68 },
  { t: 'East River', x: 507, y: 659, w: 76, s: 18, c: '#8f8f8f', r: -55 },
  { t: 'Upper Bay', x: 247, y: 1049, w: 88, s: 20, c: '#959595', r: -78 },
  { t: 'Belt', x: 701, y: 1092, w: 29, s: 18, r: -66 },
  { t: 'Pkwy', x: 714, y: 1060, w: 40, s: 18, r: -48 },
];

const Labels = () => (
  <g fontFamily="Roboto, sans-serif" stroke="#f5f5f5" strokeWidth="4" strokeLinejoin="round" style={{ paintOrder: 'stroke' }}>
    {LABELS.map((l, i) => (
      <text
        key={i}
        x={l.x}
        y={l.y}
        fontSize={l.s ?? 16}
        fontWeight={l.f ?? 400}
        fill={l.c ?? '#616161'}
        textLength={l.w}
        textAnchor={l.end ? 'end' : 'start'}
        transform={l.r ? `rotate(${l.r} ${l.x} ${l.y})` : undefined}
        stroke={l.t === 'Upper Bay' ? 'none' : undefined}
      >
        {l.t}
      </text>
    ))}
  </g>
);

const BaseMap = () => (
  <svg width="858" height="967" viewBox="39 273 858 967" style={{ display: 'block' }}>
    <defs>
      {GRIDS.map(g => (
        <pattern key={g.id} id={g.id} width={g.w} height={g.h} patternUnits="userSpaceOnUse" patternTransform={`rotate(${g.a})`}>
          <path d={`M0 0V${g.h}M0 0H${g.w}`} stroke="#fff" strokeWidth="1.8" fill="none" />
        </pattern>
      ))}
    </defs>
    <rect x="39" y="273" width="858" height="967" fill="#f5f5f5" />
    <Water />
    <Land />
    <g opacity=".8">
      {STREET_AREAS.map(([g, d], i) => <path key={i} d={d} fill={`url(#${g})`} />)}
    </g>
    <g fill="none" stroke="#fff" strokeWidth="4.6" strokeLinejoin="round">
      <Sheets items={ROADS} render={(d, i) => <path key={i} d={d} />} />
    </g>
    <g fill="none" stroke="#e0e0e0">
      <g strokeWidth="2.5"><Sheets items={RAILS} render={(d, i) => <path key={i} d={d} />} /></g>
      <g strokeWidth="20" strokeDasharray="3 42"><Sheets items={RAILS} render={(d, i) => <path key={i} d={d} />} /></g>
    </g>
    <g fill="none" stroke={HWY} strokeWidth="16" strokeLinejoin="round">
      <Sheets items={[[NW, NW_HWY], [NE, NE_HWY], [SW, SW_HWY], [SE, SE_HWY]]} render={(d, i) => <path key={i} d={d} />} />
    </g>
    <path d="M538 273L525 345L512 398L495 438L442 528L408 560L345 690" fill="none" stroke={HWY} strokeWidth="9" />
    <path d="M553 612L520 662L490 715L476 775L472 820" fill="none" stroke={HWY} strokeWidth="5" />
    <g fill="none" stroke="#e6e6e6" strokeWidth="1.4" strokeDasharray="10 4">
      <path d="M463 423L472 432L466 450L410 560L340 660L325 720L318 800L312 860" />
      <path d="M457 470L402 565L334 665L330 760L326 850" />
      <path d="M312 860L286 900L195 1055M318 860L310 905L222 1040L195 1053M297 840L287 1000L262 1090L268 1240M303 850L291 1010L266 1100V1240M335 930L300 1000L270 1080L264 1170L270 1240M330 940L284 1050L268 1130" />
      <path d="M196 923L250 917L290 895L345 870L395 850M290 840L286 885L260 912L256 900L270 895M320 850L340 875L370 880" />
      <path d="M275 1190L292 1240M262 1190L240 1240" />
      <path d="M612 545L640 525L675 516L715 519L800 495M612 545L585 575L555 590L540 595L520 620" />
      <path d="M290 1030L312 1052L290 1048" />
    </g>
    <g fill="none" stroke="#b3b3b3" strokeWidth="1.3" strokeDasharray="3.5 4">
      <path d="M530 273L505 345L480 400L468 425L410 545L345 650L322 730L316 850L300 900L262 965M40 1060L52 1064L92 1044H135L153 1032H235" />
    </g>
    <Labels />
    <Stations />
    <text x="56" y="1225" fontFamily="Lato, sans-serif" fontWeight="700" fontSize="33" textLength="103" lengthAdjust="spacingAndGlyphs" fill="#fff" stroke="#a1a1a1" strokeWidth="5" strokeLinejoin="round" style={{ paintOrder: 'stroke' }}>Google</text>
  </svg>
);

const RecenterIcon = () => (
  <svg width="72" height="72" viewBox="0 0 216 216" fill="none" stroke="#666" strokeWidth="11">
    <path d="M53 73V64Q53 53 64 53H74M143 53H152Q161 53 161 64V73M53 139V150Q53 160 64 160H74M139 160H152Q161 160 161 150V139" />
    <path d="M106 139Q82 112 82 94A24.500 24.500 0 0 1 131 94Q131 112 106 139Z" />
    <circle cx="106.500" cy="94" r="10" fill="#666" stroke="none" />
  </svg>
);

const FullscreenIcon = () => (
  <svg width="72" height="72" viewBox="0 0 216 216" fill="none" stroke="#666" strokeWidth="10">
    <path d="M62 92V65H90M123 65H151V92M62 124V150H90M123 150H151V124" />
  </svg>
);

const Pegman = () => (
  <svg width="36" height="56" viewBox="0 0 36 56">
    <path d="M9 19H27Q29 19 30 22L34 36Q34 38 32 38L27 33V53H20.500L20 40H18L17.500 53H9.500V33L4.500 38Q2 38 2.500 36L6.500 22Q7 19 9 19Z" fill="#f5bf4a" stroke="#7c7358" strokeWidth="1.200" />
    <path d="M11 19.500H25L18.500 28Z" fill="#d88a42" />
    <circle cx="18" cy="10.500" r="9.200" fill="#f5bf4a" stroke="#7c7358" strokeWidth="1.200" />
  </svg>
);

const ZoomIcon = () => (
  <svg width="72" height="146" viewBox="0 0 72 146">
    <path d="M20 36H53M36.500 20V52" stroke="#666" strokeWidth="7" />
    <path d="M9 73H63" stroke="#e3e3e3" strokeWidth="2" />
    <path d="M20 110H53" stroke="#666" strokeWidth="7" />
  </svg>
);

/* ---------- data ---------- */

const FILTERS = [
  { label: 'Select date range', w: 387, left: 52, right: 58, light: true },
  { label: 'Time of Day', w: 361, left: 44, right: 41 },
  { label: 'season', w: 335.5, left: 43, right: 42 },
  { label: 'User Type', w: 274.5, left: 44, right: 41 },
  { label: 'Start Neighborhood', w: 472, left: 44, right: 41 },
];

const ROWS: string[][] = [
  ['Chelsea-\nHudson Yards', '2.5M', '12.7', '2.8K', '23.9', '2.5M', '12.7'],
  ['East Village', '1.7M', '12.0', '766', '27.6', '1.7M', '12.0'],
  ['Murray Hill-\nKips Bay', '1.7M', '12.7', '864', '20.8', '1.7M', '12.7'],
  ['Midtown\nSouth-\nFlatiron-Uni...', '1.6M', '11.8', '1K', '25.5', '1.6M', '11.8'],
  ['Midtown-\nTimes Square', '1.5M', '12.5', '1.7K', '26.3', '1.5M', '12.5'],
  ['West Village', '1.2M', '12.9', '1.3K', '26.4', '1.2M', '12.9'],
  ['Greenwich\nVillage', '1.2M', '11.5', '875', '20.4', '1.2M', '11.5'],
  ['Financial\nDistrict-\nBattery Park...', '1.1M', '16.8', '2.1K', '27.4', '1.1M', '16.8'],
  ["Hell's Kitchen", '1M', '13.3', '1.1K', '25.0', '1M', '13.3'],
];
const PR = [29, 29, 29, 28, 30, 28];

const Numbers = ({ values, line, bold, head }: { values: string[]; line: LineKind; bold?: boolean; head?: boolean }) => (
  <>
    {values.map((v, i) => (
      <Cell
        key={i}
        $line={line}
        $gap={i < 3}
        $rule={(i === 0 || i === 4) && !head}
        $bold={bold || i > 3}
        $pr={PR[i]}
        $pt={head ? (i > 3 ? 13 : 14) : 13.5}
        $lh={head ? 21.7 : 25}
      >
        {v}
      </Cell>
    ))}
  </>
);

export default function App() {
  return (
    <Frame>
      <GlobalStyle />
      <Page>
        <TopBar>
          <LogoSlot><Logo /></LogoSlot>
          <Filters>
            {FILTERS.map(f => (
              <FilterBox key={f.label} $w={f.w} $left={f.left} $right={f.right} $light={f.light}>
                {f.label}
                <Caret />
              </FilterBox>
            ))}
            <ResetButton $w={360.5} $left={0} $right={0}>Reset Filter</ResetButton>
          </Filters>
        </TopBar>
        <Panels>
          <Column $w={888} $mt={4}>
            <Banner $shift={56} $lift={9}>Start Station Location</Banner>
            <Card $h={1101} $ml={11} $mr={16}>
              <MapArea>
                <BaseMap />
                <MapButton $x={18} $y={8}><RecenterIcon /></MapButton>
                <MapButton $x={769} $y={8}><FullscreenIcon /></MapButton>
                <MapButton $x={768} $y={648}><Pegman /></MapButton>
                <MapButton $x={768} $y={778} $h={146}><ZoomIcon /></MapButton>
                <Attribution>
                  <AttrItem $w={177}>Keyboard shortcuts</AttrItem>
                  <AttrItem $w={218}>Map data ©2025 Google</AttrItem>
                  <AttrItem $w={61}>Terms</AttrItem>
                  <AttrDivider />
                  <AttrItem $w={150}>Report a map error</AttrItem>
                </Attribution>
              </MapArea>
              <Legend>
                <LegendGroup $w={272}>
                  <LegendTitle>Number of trip</LegendTitle>
                  <LegendRow>
                    <LegendValue $w={12}>5</LegendValue>
                    <Dot $d={7} $ml={18} />
                    <Dot $d={22} $ml={18} />
                    <Dot $d={36} $ml={18} />
                    <LegendValue $ml={18}>440,464</LegendValue>
                  </LegendRow>
                </LegendGroup>
                <LegendGroup $w={300}>
                  <LegendTitle>Average trip time (min)</LegendTitle>
                  <LegendRow>
                    <LegendValue $w={47}>1.71</LegendValue>
                    <Ramp />
                    <LegendValue $ml={5}>36.37</LegendValue>
                  </LegendRow>
                </LegendGroup>
              </Legend>
            </Card>
          </Column>
          <Column $w={1519} $ml={14}>
            <Banner $shift={45}>Trips Start Location by user type</Banner>
            <Card $h={1112}>
              <Table>
                <GroupRow>
                  <div />
                  <GroupCell $line $pr={29}>Subscriber</GroupCell>
                  <div />
                  <GroupCell $line $pr={28}>Customer</GroupCell>
                  <GroupCell $bold $pr={33}>Grand total</GroupCell>
                </GroupRow>
                <Row $h={74}>
                  <Cell $line="hard" $pt={14} $lh={21.7} $pl={9}>
                    <BoroughHead><CollapseBox />Start Borough</BoroughHead>
                  </Cell>
                  <Cell $line="hard" $pt={14} $lh={21.7} $pl={14}>{'Start\nNeigborhood'}</Cell>
                  <Numbers
                    values={['Number Trips', 'Average Trip\nDuration (min)', 'Number Trips', 'Average Trip\nDuration (min)', 'Number Trips', 'Average Trip\nDuration (min)']}
                    line="hard"
                    head
                  />
                </Row>
                {ROWS.map((r, i) => {
                  const last = i === ROWS.length - 1;
                  return (
                    <Row key={r[0]} $h={last ? 57 : i === 5 ? 107 : 106}>
                      <Cell $line={last ? 'hard' : 'none'} $pt={14.5} $lh={25} $pl={15}>{i === 0 ? 'Manhattan' : ''}</Cell>
                      <Cell $line={last ? 'hard' : 'soft'} $pt={14.5} $lh={25.2} $pl={14}>{r[0]}</Cell>
                      <Numbers values={r.slice(1)} line={last ? 'hard' : 'soft'} />
                    </Row>
                  );
                })}
                <Row $h={51}>
                  <Cell $line="hard" $pt={13.5} $lh={25} $pl={15} $bold>Grand total</Cell>
                  <Cell $line="hard" $pt={13.5} $lh={25} />
                  <Numbers values={['21.8M', '13.2', '26K', '26.6', '21.8M', '13.2']} line="hard" bold />
                </Row>
              </Table>
            </Card>
          </Column>
        </Panels>
      </Page>
    </Frame>
  );
}
